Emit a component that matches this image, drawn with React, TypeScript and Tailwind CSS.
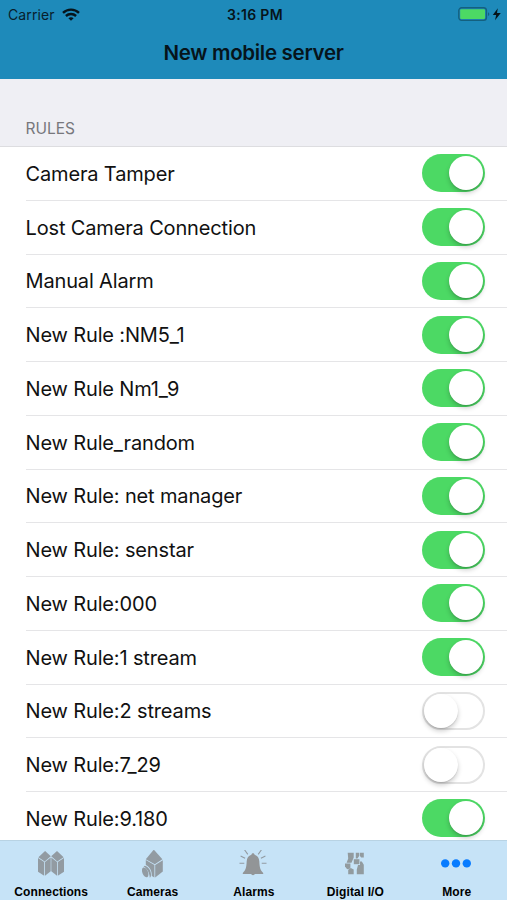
import { useState } from 'react';

const initialRules = [
  { name: 'Camera Tamper', enabled: true },
  { name: 'Lost Camera Connection', enabled: true },
  { name: 'Manual Alarm', enabled: true },
  { name: 'New Rule :NM5_1', enabled: true },
  { name: 'New Rule Nm1_9', enabled: true },
  { name: 'New Rule_random', enabled: true },
  { name: 'New Rule: net manager', enabled: true },
  { name: 'New Rule: senstar', enabled: true },
  { name: 'New Rule:000', enabled: true },
  { name: 'New Rule:1 stream', enabled: true },
  { name: 'New Rule:2 streams', enabled: false },
  { name: 'New Rule:7_29', enabled: false },
  { name: 'New Rule:9.180', enabled: true },
];

function WifiIcon() {
  return (
    <svg width="18" height="13" viewBox="0 0 18 13" fill="none" stroke="#06141b" strokeWidth="2.4">
      <path d="M1 4.8C5.4.5 12.6.5 17 4.8" />
      <path d="M3.9 8c2.9-2.7 7.3-2.7 10.2 0" />
      <path d="M6.4 10.2c1.5-1.3 3.7-1.3 5.2 0L9 12.8z" fill="#06141b" stroke="none" />
    </svg>
  );
}

function BatteryIcon() {
  return (
    <svg width="44" height="15" viewBox="0 0 44 15">
      <rect x="0.8" y="0.8" width="27.6" height="12.6" rx="2.8" fill="none" stroke="#14607f" strokeWidth="1.4" />
      <rect x="2.2" y="2.2" width="24.8" height="9.8" rx="1.2" fill="#4cd964" />
      <path d="M30 5.2c1.8.6 1.8 3.2 0 3.8z" fill="#14607f" />
      <path d="M39.8 1.2 34.8 8h3.4l-1.2 5.3 5.8-7.3h-3.8z" fill="#06141b" />
    </svg>
  );
}

function ConnectionsIcon() {
  return (
    <svg width="28" height="28" viewBox="0 0 28 28" fill="#929ba2">
      <path d="M8.1 1 13.8 6.3 7.7 11.4 1.4 7.3z" />
      <path d="M20 1 26.6 7.3 20.3 11.4 14.2 6.3z" />
      <path d="M1 8 7.2 12.1V25.8L1 21.8z" />
      <path d="M8 12.1 13.7 7.5V21.2L8 25.8z" />
      <path d="M14.3 7.5 20 12.1V25.8L14.3 21.2z" />
      <path d="M20.8 12.1 27 8V21.8L20.8 25.8z" />
    </svg>
  );
}

function CamerasIcon() {
  return (
    <svg width="28" height="30" viewBox="0 0 28 30" fill="#929ba2">
      <path d="M15.8-.4 24.4 9.3 16.8 14.2 7.8 9.3z" />
      <path d="M17.2 15 24.8 10.2V21.4L17.2 27.4z" />
      <path d="M7.8 10.1 16.4 15V27.6l-2.6-1.6C14 20.8 11.8 16.8 7.8 15z" />
      <path d="M6.8 15.8c3.6.8 6.2 5 6.2 9 0 1.6-.4 2.6-1.2 2.9C11.4 23 9.4 18.6 5.6 16.6z" />
      <ellipse cx="7.2" cy="22.4" rx="2.8" ry="5.2" transform="rotate(-22 7.2 22.4)" />
    </svg>
  );
}

function AlarmsIcon() {
  return (
    <svg width="28" height="28" viewBox="0 0 28 28" fill="#929597">
      <path d="M14 3.2c.9 0 1.5.7 1.6 1.5 2.9.8 4.5 3.2 4.7 6.6.3 6.1.8 8.6 3.9 11.6v1H3.8v-1c3.1-3 3.6-5.5 3.9-11.6.2-3.4 1.8-5.8 4.7-6.6.1-.8.7-1.5 1.6-1.5z" />
      <path d="M12 23.6h4c-.3 1.1-1.1 1.7-2 1.7s-1.7-.6-2-1.7z" />
      <path d="M5.5-.2 8.8 4.4M22.5-.2 19.2 4.4M1.6 5.9l4.5 2.3M26.4 5.9l-4.5 2.3M.5 13.3h4.8M27.5 13.3h-4.8" fill="none" stroke="#929ba2" strokeWidth="1.1" />
    </svg>
  );
}

function DigitalIcon() {
  return (
    <svg width="28" height="28" viewBox="0 0 28 28" fill="#929b9f">
      <path d="M6.7 2.8h6v4.6l-2.2 5.4H5.6l1.6-4.4z" />
      <path d="M4 13.4h5.4v5.2l-3.2.6L4 16.4z" />
      <path d="M7.2 19.8 9.8 18l2.9 1.6v4.6H7.2z" />
      <path d="M14.8 2.8h3.2v3.4l-1.6 2.4h-1.6zM18.7 2.8h4.1v4.8h-2.6l-1.5-1.8z" />
      <path d="M12.8 9.2h5.6v5h-5.6z" />
      <path d="M19 11.4h1.8l2 3.4v9.4h-7V19.4l1.2-4.4H19z" />
    </svg>
  );
}

function MoreIcon() {
  return (
    <svg width="30" height="28" viewBox="0 0 30 28" fill="#087cff">
      <circle cx="4.2" cy="13.4" r="4.2" />
      <circle cx="15" cy="13.4" r="4.2" />
      <circle cx="25.8" cy="13.4" r="4.2" />
    </svg>
  );
}

const tabs = [
  { label: 'Connections', Icon: ConnectionsIcon },
  { label: 'Cameras', Icon: CamerasIcon },
  { label: 'Alarms', Icon: AlarmsIcon },
  { label: 'Digital I/O', Icon: DigitalIcon },
  { label: 'More', Icon: MoreIcon },
];

function Toggle({ enabled, onChange }: { enabled: boolean; onChange: () => void }) {
  return (
    <button
      role="switch"
      aria-checked={enabled}
      onClick={onChange}
      className={`flex h-[38px] w-[63px] shrink-0 items-center rounded-full ${
        enabled ? 'justify-end bg-[#4cd964] pr-0.5' : 'justify-start border-2 border-[#e3e3e3] bg-white'
      }`}
    >
      <span className="size-[34px] rounded-full bg-white shadow-[0_3px_5px_rgba(0,0,0,0.2),0_1px_1px_rgba(0,0,0,0.1)]" />
    </button>
  );
}

export default function App() {
  const [rules, setRules] = useState(initialRules);

  const toggleRule = (index: number) => {
    setRules(rules.map((rule, i) => (i === index ? { ...rule, enabled: !rule.enabled } : rule)));
  };

  return (
    <div className="flex h-[900px] w-[507px] flex-col overflow-hidden bg-white font-['Inter','Liberation_Sans',sans-serif] text-[#111111] [font-feature-settings:'calt'_0]">
      <header className="h-[79px] shrink-0 bg-[#1e8aba] text-[#06141b]">
        <div className="grid h-7 grid-cols-3 items-center pl-[8px] pr-[5px]">
          <div className="flex items-center gap-[7px]">
            <span className="text-[14px] tracking-[0.1px] text-[#08202c]">Carrier</span>
            <WifiIcon />
          </div>
          <span className="text-center text-[14px] font-semibold tracking-[0.3px]">3:16 PM</span>
          <div className="flex justify-end">
            <BatteryIcon />
          </div>
        </div>
        <h1 className="pt-[11px] text-center text-[20.5px] leading-[28px] font-semibold tracking-[-0.3px]">New mobile server</h1>
      </header>

      <div className="flex h-[68px] shrink-0 items-end border-b border-[#dddde0] bg-[#efeff4] pb-[7px] pl-[25.5px]">
        <h2 className="text-[15.5px] leading-5 text-[#77777c]">RULES</h2>
      </div>

      <main className="min-h-0 flex-1 overflow-hidden">
        {rules.map((rule, index) => (
          <div key={rule.name} className="ml-[25.5px] flex h-[53.75px] items-center justify-between border-b border-[#e5e5e7] pr-[22px]">
            <span className="pt-px text-[20px] tracking-[-0.15px]">{rule.name}</span>
            <Toggle enabled={rule.enabled} onChange={() => toggleRule(index)} />
          </div>
        ))}
      </main>

      <nav className="grid h-[60px] shrink-0 grid-cols-5 border-t border-[#b8d3e4] bg-[#c6e3f7]">
        {tabs.map(({ label, Icon }) => (
          <button key={label} className="flex flex-col items-center pt-[9px]">
            <span className="flex h-[34px] items-start">
              <Icon />
            </span>
            <span className="pl-px font-['Liberation_Sans',sans-serif] text-[12px] leading-4 font-bold tracking-[0.1px] text-black">{label}</span>
          </button>
        ))}
      </nav>
    </div>
  );
}
